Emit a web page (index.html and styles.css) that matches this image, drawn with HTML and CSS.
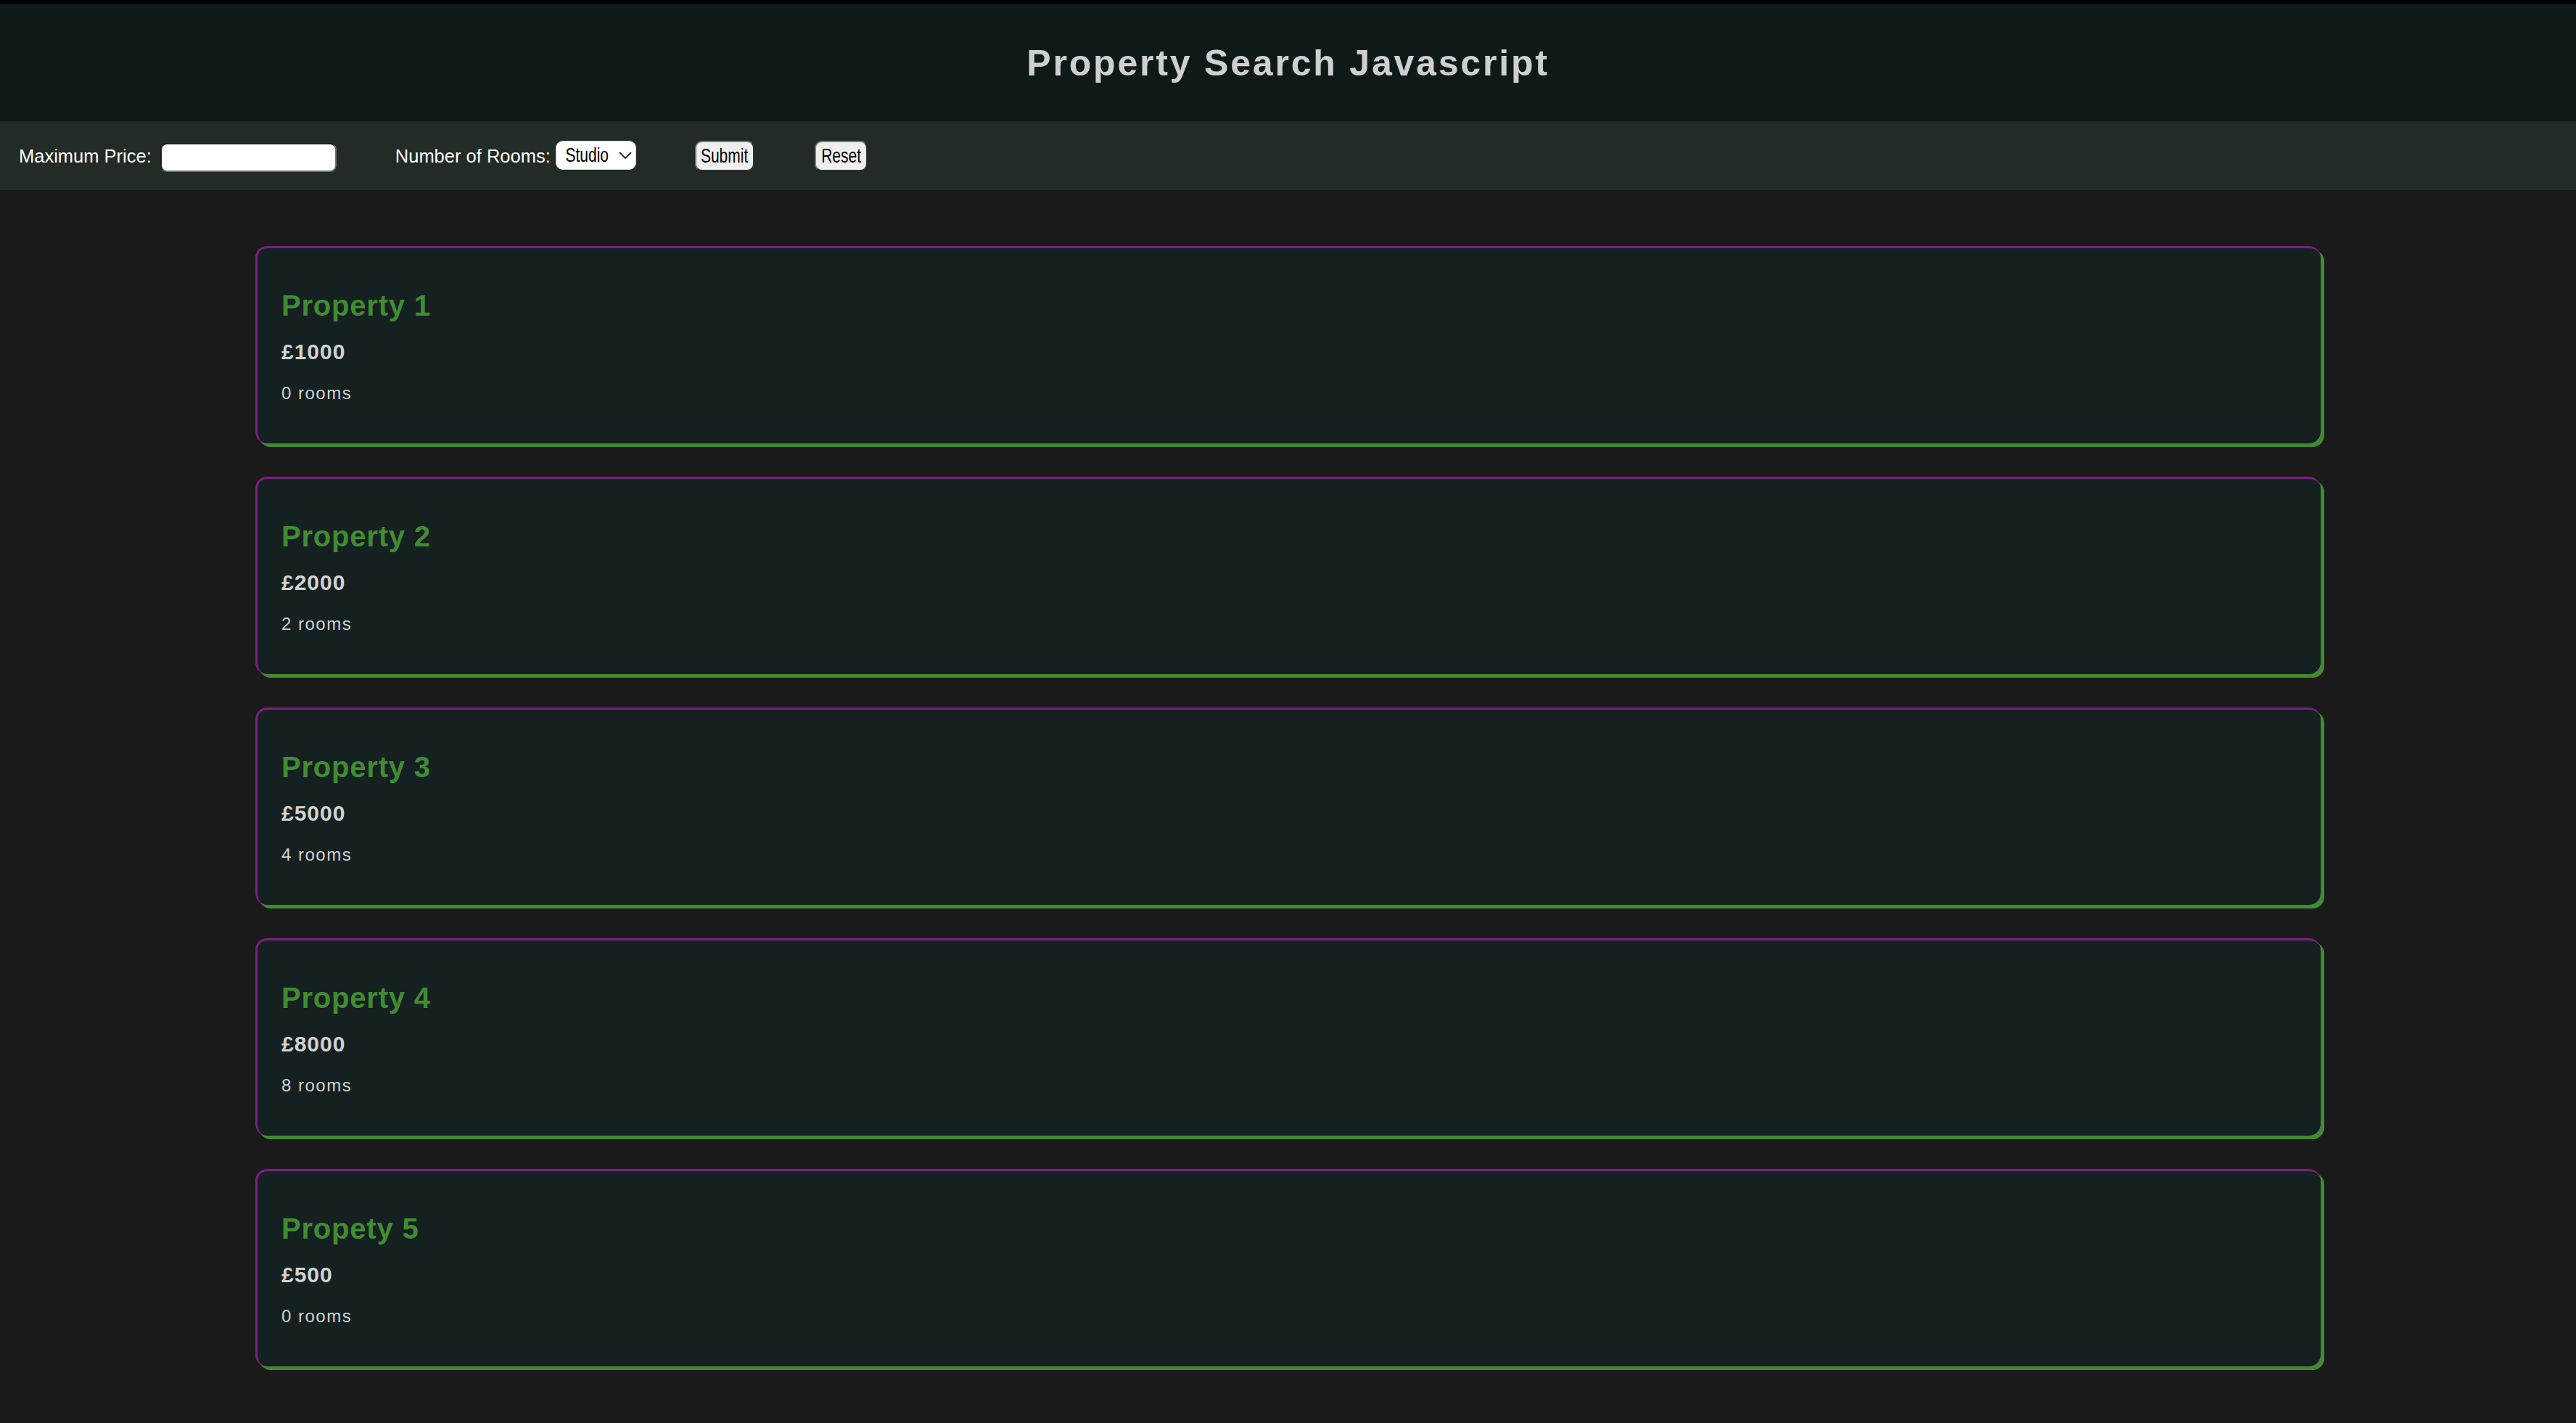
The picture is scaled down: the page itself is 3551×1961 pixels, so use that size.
FILE: index.html
```html
<!DOCTYPE html>
<html lang="en">
<head>
<meta charset="utf-8">
<title>Property Search Javascript</title>
<link rel="stylesheet" href="styles.css">
</head>
<body>
<header class="site-header">
  <h1 class="site-title">Property Search Javascript</h1>
</header>
<form class="filters">
  <label class="filter-label" for="maxPrice">Maximum Price:</label>
  <input class="price-input" id="maxPrice" type="text">
  <label class="filter-label rooms-label" for="rooms">Number of Rooms:</label>
  <span class="select-wrap">
    <select class="rooms-select" id="rooms">
      <option>Studio</option>
      <option>1</option>
      <option>2</option>
      <option>3</option>
      <option>4</option>
    </select>
    <svg class="select-chevron" width="18" height="10" viewBox="0 0 18 10"><path d="M1 1 L9 9 L17 1" fill="none" stroke="#222" stroke-width="1.8"/></svg>
  </span>
  <button class="btn btn-submit" type="button"><span class="btn-text">Submit</span></button>
  <button class="btn btn-reset" type="button"><span class="btn-text">Reset</span></button>
</form>
<main class="listings">
  <article class="card">
    <h2 class="card-title">Property 1</h2>
    <p class="card-price">£1000</p>
    <p class="card-rooms">0 rooms</p>
  </article>
  <article class="card">
    <h2 class="card-title">Property 2</h2>
    <p class="card-price">£2000</p>
    <p class="card-rooms">2 rooms</p>
  </article>
  <article class="card">
    <h2 class="card-title">Property 3</h2>
    <p class="card-price">£5000</p>
    <p class="card-rooms">4 rooms</p>
  </article>
  <article class="card">
    <h2 class="card-title">Property 4</h2>
    <p class="card-price">£8000</p>
    <p class="card-rooms">8 rooms</p>
  </article>
  <article class="card">
    <h2 class="card-title">Propety 5</h2>
    <p class="card-price">£500</p>
    <p class="card-rooms">0 rooms</p>
  </article>
</main>
</body>
</html>
```
FILE: styles.css
```css
* { box-sizing: border-box; }

html, body {
  margin: 0;
  padding: 0;
}

body {
  background: #1a1a1a;
  font-family: "Liberation Sans", Arial, Helvetica, sans-serif;
  min-height: 100vh;
}

.site-header {
  height: 167px;
  border-top: 5px solid #000;
  background: #0e1919;
  display: flex;
  align-items: center;
  justify-content: center;
}

.site-title {
  margin: 0;
  font-size: 50px;
  font-weight: bold;
  letter-spacing: 2.8px;
  color: #cfcfcf;
  line-height: 60px;
  padding-top: 2px;
}

.filters {
  height: 95px;
  margin: 0;
  background: #232b26;
  display: flex;
  align-items: center;
  padding-left: 26px;
}

.filter-label {
  font-size: 25.5px;
  color: #ffffff;
  line-height: 30px;
}

.rooms-label {
  margin-left: 81px;
}

.price-input {
  margin-left: 12px;
  width: 243px;
  height: 40px;
  margin-top: 4px;
  background: #fff;
  border: 2px solid;
  border-color: #1f1f1f #707070 #707070 #1f1f1f;
  border-radius: 9px;
  padding: 0 8px;
  font-size: 24px;
  outline: none;
}

.select-wrap {
  position: relative;
  display: inline-block;
  margin-left: 7px;
  width: 111px;
  height: 40px;
  margin-top: -2px;
}

.rooms-select {
  -webkit-appearance: none;
  appearance: none;
  width: 148px;
  height: 40px;
  transform: scaleX(0.75);
  transform-origin: left center;
  background: #fff;
  border: 1px solid #d8d8d8;
  border-radius: 13px / 10px;
  padding: 0 0 0 17px;
  font-family: "Liberation Sans", Arial, sans-serif;
  font-size: 28px;
  color: #000;
  outline: none;
}

.select-chevron {
  position: absolute;
  left: 87px;
  top: 15px;
  pointer-events: none;
}

.btn {
  height: 42px;
  background: #efefef;
  border: 2px solid;
  border-color: #7a7a7a #2e2e2e #2e2e2e #7a7a7a;
  border-radius: 10px;
  color: #000;
  font-family: "Liberation Sans", Arial, sans-serif;
  font-size: 28px;
  padding: 0;
  line-height: 36px;
  display: flex;
  align-items: center;
  justify-content: center;
  overflow: hidden;
}

.btn-text {
  display: inline-block;
  transform: scaleX(0.75);
  white-space: nowrap;
}

.btn-submit {
  margin-left: 81px;
  width: 82px;
}

.btn-reset {
  margin-left: 83px;
  width: 73px;
}

.listings {
  display: flex;
  flex-direction: column;
  align-items: center;
  gap: 46px;
  padding-top: 77px;
  padding-bottom: 60px;
}

.card {
  width: 2847px;
  background: #152120;
  border-top: 3px solid #7b1f82;
  border-left: 3px solid #7b1f82;
  border-radius: 16px;
  box-shadow: 5px 5px 0 0 #428a32;
  padding: 56px 33px 55px 33px;
}

.card-title {
  margin: 0;
  font-size: 40px;
  line-height: 46px;
  font-weight: bold;
  letter-spacing: 0.8px;
  color: #418c33;
}

.card-price {
  margin: 23px 0 0 0;
  font-size: 30px;
  line-height: 36px;
  font-weight: bold;
  letter-spacing: 1px;
  color: #d2d2d2;
}

.card-rooms {
  margin: 25px 0 0 0;
  font-size: 24px;
  line-height: 28px;
  letter-spacing: 1.5px;
  color: #d2d2d2;
}
```
